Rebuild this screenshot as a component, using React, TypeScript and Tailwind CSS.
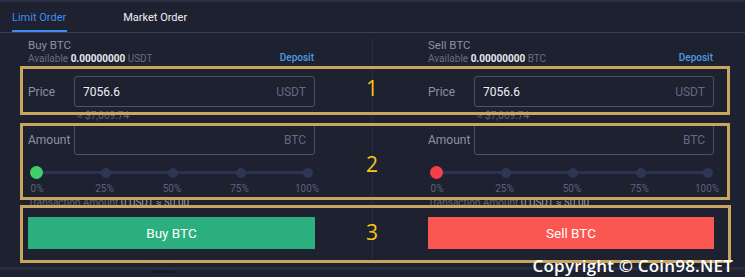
import React from 'react';

type Side = 'buy' | 'sell';

const marks = ['0%', '25%', '50%', '75%', '100%'];

const OrderColumn: React.FC<{ side: Side }> = ({ side }) => {
  const isBuy = side === 'buy';
  const unit = isBuy ? 'USDT' : 'BTC';

  return (
    <div className={`flex flex-col ${isBuy ? 'w-[287px]' : 'w-[286px]'}`}>
      <div className="h-[14px] pt-[5px] box-content leading-[14px] text-[11.5px] text-[#8a91a5]">{isBuy ? 'Buy BTC' : 'Sell BTC'}</div>
      <div className="h-[14px] flex items-center justify-between leading-[14px] text-[10px]">
        <span className="text-[#676f85]">
          Available <span className="font-bold text-[#e8eaf0]">0.00000000</span> {unit}
        </span>
        <span className="font-medium text-[#4d9ce0] pr-[1px] -mt-[2px]">Deposit</span>
      </div>

      {/* price */}
      <div className="mt-[10px] flex items-center h-[31px]">
        <span className="w-[46px] text-[12px] text-[#8a91a5]">Price</span>
        <div className="flex-1 h-full border border-[#48526f] rounded-[3px] flex items-center justify-between pl-[8px] pr-[8px]">
          <span className="text-[12px] text-[#eef0f5]">7056.6</span>
          <span className="text-[12px] text-[#616a86]">USDT</span>
        </div>
      </div>
      <div className="h-[17px] pl-[49px] pt-[3px] leading-[12px] text-[10px] text-[#5f6780]">≈ $7,069.74</div>

      {/* amount */}
      <div className="flex items-center h-[31px]">
        <span className="w-[46px] text-[12px] text-[#8a91a5]">Amount</span>
        <div className="flex-1 h-full border border-[#48526f] rounded-[3px] flex items-center justify-end pr-[8px]">
          <span className="text-[12px] text-[#616a86]">BTC</span>
        </div>
      </div>

      {/* slider */}
      <div className="relative mt-[11px] ml-[2px] w-[283px] h-[13px] flex items-center justify-between">
        <div className="absolute left-[6px] right-[5px] top-[5px] h-[3px] bg-[#2c3352]" />
        <div className={`relative w-[13px] h-[13px] rounded-full ${isBuy ? 'bg-[#3fd06b]' : 'bg-[#f5404a]'}`} />
        <div className="relative w-[10px] h-[10px] rounded-full bg-[#2e3656]" />
        <div className="relative w-[10px] h-[10px] rounded-full bg-[#2e3656]" />
        <div className="relative w-[10px] h-[10px] rounded-full bg-[#2e3656]" />
        <div className="relative w-[10px] h-[10px] rounded-full bg-[#2e3656]" />
      </div>
      <div className="mt-[4px] -ml-[6px] w-[300px] flex justify-between">
        {marks.map((m) => (
          <span key={m} className="w-[30px] text-center leading-[12px] text-[10px] text-[#5a6380]">{m}</span>
        ))}
      </div>

      <div className="mt-[2px] h-[12px] leading-[12px] text-[10px] text-[#5f6780]">
        Transaction Amount <span className="text-[#9aa1b3]">0 USDT ≈ $0.00</span>
      </div>

      <button
        className={`mt-[8px] h-[32px] w-full text-[13.5px] text-white ${isBuy ? 'bg-[#2baf7f]' : 'bg-[#fa5752]'}`}
      >
        {isBuy ? 'Buy BTC' : 'Sell BTC'}
      </button>
    </div>
  );
};

const Note: React.FC<{ className: string }> = ({ className }) => (
  <div className={`absolute border-[3px] border-[#c9a55d] ${className}`} />
);

export default function App() {
  return (
    <div className="relative w-[745px] h-[277px] overflow-hidden bg-[#1d2130] font-['Roboto',sans-serif]">
      <div className="h-[2px] bg-[#2a3041]" />

      {/* tabs */}
      <div className="h-[31px] flex items-stretch border-b border-[#38415a] pl-[12px] text-[11px]">
        <div className="relative flex items-center text-[#3d8ef2] pt-[2px]">
          Limit Order
          <div className="absolute left-0 -right-[1px] bottom-0 h-[2px] bg-[#3d8ef2]" />
        </div>
        <div className="ml-[57px] flex items-center text-[#eef0f5] pt-[2px]">Market Order</div>
      </div>

      {/* body */}
      <div className="flex pl-[28px]">
        <OrderColumn side="buy" />
        <div className="w-[113px] flex justify-center pl-[1px]">
          <div className="w-px mt-[6px] h-[220px] bg-[#272d3e]" />
        </div>
        <OrderColumn side="sell" />
      </div>

      <div className="mt-[8px] h-[3px] bg-[#272d3d]" />
      <div className="ml-[151px] w-[24px] h-[3px] bg-[#181c28]" />

      {/* annotations */}
      <Note className="left-[20px] top-[66px] w-[710px] h-[49px]" />
      <Note className="left-[20px] top-[123px] w-[710px] h-[77px]" />
      <Note className="left-[20px] top-[205px] w-[711px] h-[58px]" />
      <div className="absolute left-[364px] top-[74px] w-[16px] text-center text-[21px] leading-[28px] text-[#f7c510] font-['Open_Sans',sans-serif]">1</div>
      <div className="absolute left-[364px] top-[150px] w-[16px] text-center text-[21px] leading-[28px] text-[#f7c510] font-['Open_Sans',sans-serif]">2</div>
      <div className="absolute left-[364px] top-[218px] w-[16px] text-center text-[21px] leading-[28px] text-[#f7c510] font-['Open_Sans',sans-serif]">3</div>

      <div className="absolute right-[12px] bottom-[0px] text-[17px] tracking-[0.2px] leading-[22px] font-semibold text-white font-['Open_Sans',sans-serif]">
        Copyright © Coin98.NET
      </div>
    </div>
  );
}
